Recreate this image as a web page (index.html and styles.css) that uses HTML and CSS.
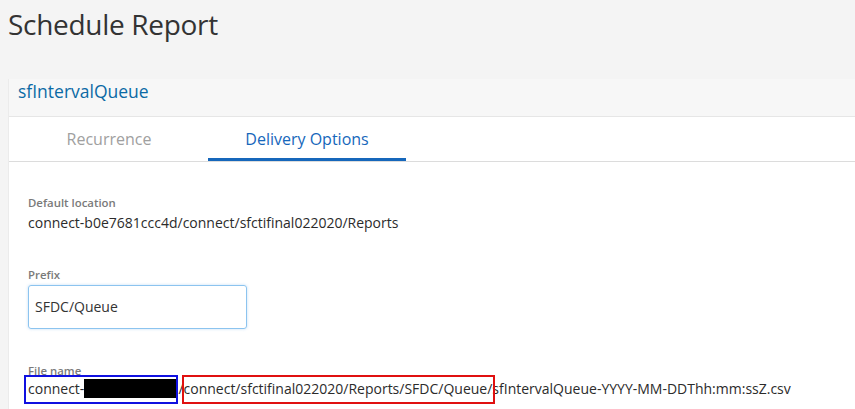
FILE: index.html
```html
<!DOCTYPE html>
<html>
<head>
<meta charset="utf-8">
<link rel="stylesheet" href="styles.css">
</head>
<body>
<h1 class="page-title">Schedule Report</h1>
<section class="panel">
  <header class="panel-header">sfIntervalQueue</header>
  <div class="panel-body">
    <nav class="tabs">
      <div class="tab">Recurrence</div>
      <div class="tab active">Delivery Options</div>
    </nav>
    <div class="content">
      <div class="field field-default">
        <div class="label">Default location</div>
        <div class="value">connect-b0e7681ccc4d/connect/sfctifinal022020/Reports</div>
      </div>
      <div class="field field-prefix">
        <div class="label">Prefix</div>
        <div class="input">SFDC/Queue</div>
      </div>
      <div class="field field-file">
        <div class="label">File name</div>
        <div class="value file-value">connect-<span class="redact"></span>/connect/sfctifinal022020/Reports/SFDC/Queue/sfIntervalQueue-YYYY-MM-DDThh:mm:ssZ.csv<span class="mark mark-blue"></span><span class="mark mark-red"></span></div>
      </div>
    </div>
  </div>
</section>
</body>
</html>
```
FILE: styles.css
```css
html, body {
  margin: 0;
  padding: 0;
  background: #f4f4f4;
  font-family: "Open Sans", "Noto Sans", sans-serif;
  color: #333;
  overflow: hidden;
}
.page-title {
  margin: 0;
  padding: 4px 0 0 8px;
  font-size: 28px;
  font-weight: 400;
  line-height: 40px;
  color: #333;
  letter-spacing: -0.3px;
}
.panel {
  margin: 35px 0 0 8px;
  background: #fff;
  border-left: 1px solid #ebebeb;
}
.panel-header {
  height: 38px;
  background: #f7f7f7;
  border-bottom: 1px solid #e6e6e6;
  padding-left: 9px;
  font-size: 17.5px;
  font-weight: 500;
  line-height: 24px;
  color: #0b6aa5;
  box-sizing: border-box;
}
.panel-body {
  background: #fff;
  height: 300px;
}
.tabs {
  display: flex;
  padding-left: 1px;
  border-bottom: 1px solid #dcdcdc;
  height: 45px;
  box-sizing: border-box;
}
.tab {
  width: 198px;
  text-align: center;
  font-size: 16px;
  padding-top: 4px;
  line-height: 37px;
  color: #a0a0a0;
  box-sizing: border-box;
  border-bottom: 3px solid transparent;
}
.tab.active {
  color: #1667bb;
  border-bottom-color: #1667bb;
}
.content {
  padding-left: 19px;
}
.label {
  font-size: 11.4px;
  font-weight: 600;
  color: #7a7a7a;
  line-height: 14px;
}
.value {
  font-size: 14px;
  line-height: 20px;
  color: #2b2b2b;
}
.field-default {
  padding-top: 34px;
}
.field-default .value {
  margin-top: 3px;
}
.field-prefix {
  padding-top: 35px;
}
.input {
  margin-top: 3px;
  width: 219px;
  height: 44px;
  box-sizing: border-box;
  border: 1px solid #8cc4ef;
  border-radius: 3px;
  box-shadow: 0 0 3px rgba(120, 180, 235, 0.45);
  padding-left: 6px;
  font-size: 14px;
  line-height: 42px;
  color: #333;
}
.field-file {
  padding-top: 35px;
}
.file-value {
  margin-top: 1px;
  white-space: nowrap;
  position: relative;
}
.redact {
  display: inline-block;
  width: 94px;
  height: 19px;
  background: #000;
  vertical-align: top;
}
.mark {
  position: absolute;
  top: -4px;
  height: 29px;
  box-sizing: border-box;
  border: 2px solid;
}
.mark-blue {
  left: -4px;
  width: 154px;
  border-color: #1010e0;
}
.mark-red {
  left: 154px;
  width: 313px;
  border-color: #e01010;
}
```
